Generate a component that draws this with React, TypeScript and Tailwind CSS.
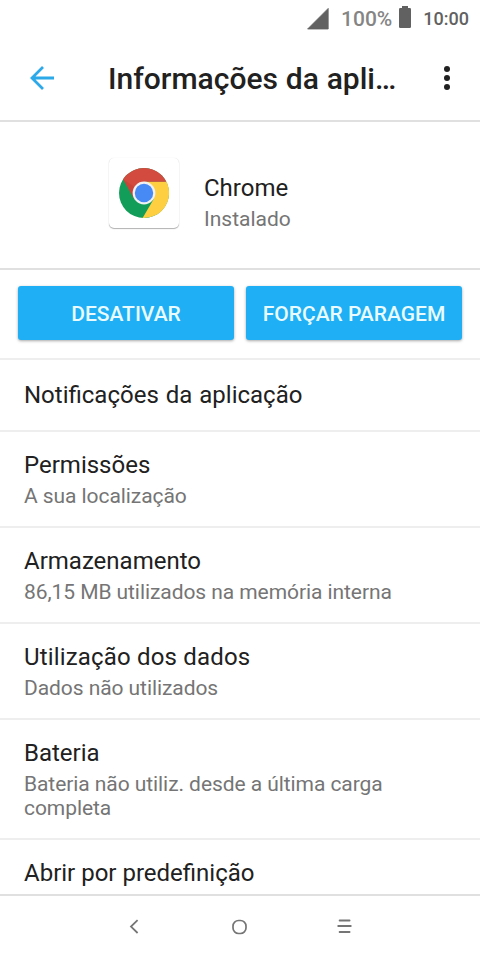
import React from 'react';

const SETTINGS: { title: string; summary?: string; spacing?: string }[] = [
  { title: 'Notificações da aplicação', spacing: '[word-spacing:1px]' },
  { title: 'Permissões', summary: 'A sua localização' },
  { title: 'Armazenamento', summary: '86,15 MB utilizados na memória interna' },
  { title: 'Utilização dos dados', summary: 'Dados não utilizados', spacing: 'tracking-[0.17px]' },
  { title: 'Bateria', summary: 'Bateria não utiliz. desde a última carga completa' },
];

const StatusBar = () => (
  <div className="flex h-9 shrink-0 items-center justify-end pt-0.5 pr-[11px] text-[#616161]">
    <svg className="mr-3 size-[22px]" viewBox="0 0 22 22" fill="currentColor">
      <path d="M21.2 0.4V21H0.6z" stroke="currentColor" strokeWidth="0.8" strokeLinejoin="round" />
    </svg>
    <span className="mr-[7px] text-[21px] leading-6 font-medium text-[#858585]">100%</span>
    <svg className="mr-3 mb-1 h-[22px] w-3" viewBox="0 0 12 22" fill="currentColor">
      <path d="M3 0h6v2.5H3z" />
      <rect y="2" width="12" height="20" rx="1.2" />
    </svg>
    <span className="text-[18px] leading-6 font-medium">10:00</span>
  </div>
);

const ChromeIcon = () => (
  <div className="flex size-[70px] items-center justify-center rounded-[5px] bg-white shadow-[0_1px_1px_rgba(0,0,0,0.3),0_0_1px_rgba(0,0,0,0.15)]">
    <svg className="size-[70px]" viewBox="0 0 70 70">
      <circle cx="35" cy="35" r="25" fill="#129d59" />
      <path d="M35 23.6H57.3A25 25 0 0 1 33.6 60L44.9 40.7L35 35z" fill="#fdcf41" />
      <path d="M57.3 23.7H35V35L25.1 40.7L14.1 21.3A25 25 0 0 1 57.3 23.7z" fill="#d34a3e" />
      <path d="M14.1 21.3L25.1 40.7L25.6 29z" fill="#b93d32" opacity="0.4" />
      <circle cx="35" cy="35" r="11.4" fill="#f1f1f1" />
      <circle cx="35" cy="35" r="9.2" fill="#4789f5" />
    </svg>
  </div>
);

const ActionButton = ({ label }: { label: string }) => (
  <button className="h-[54px] flex-1 rounded-[3px] bg-[#1eaff5] pt-[3px] text-[21px] font-medium text-[#e9fbff] shadow-[0_1px_3px_rgba(0,0,0,0.35)]">
    {label}
  </button>
);

const SettingRow = ({ title, summary, spacing = '' }: { title: string; summary?: string; spacing?: string }) => (
  <li className={`border-b-2 border-[#eeeeee] px-6 ${summary ? 'pt-[19px] pb-[18px]' : 'py-[21px]'}`}>
    <p className={`text-2xl leading-7 text-[#212121] ${spacing}`}>{title}</p>
    {summary && (
      <p className="mt-[5px] text-[21px] leading-6 tracking-[-0.07px] text-[#757575]">{summary}</p>
    )}
  </li>
);

export default function App() {
  return (
    <div className="flex h-[960px] w-[480px] flex-col overflow-hidden bg-white font-[Roboto,sans-serif]">
      <StatusBar />

      <header className="flex h-[86px] shrink-0 items-center border-b-2 border-[#e0e0e0] pl-[30px]">
        <svg className="size-6 shrink-0" viewBox="0 0 24 24" fill="none" stroke="#2ba9e8" strokeWidth="2.8">
          <path d="M24 12H2M13 1L2 12L13 23" />
        </svg>
        <h1 className="ml-[54px] w-[290px] pt-0.5 text-[30px] leading-9 font-medium whitespace-nowrap text-[#212121] [word-spacing:0.4px]">
          Informações da apli…
        </h1>
        <svg className="ml-[46px] h-6 w-1.5 shrink-0" viewBox="0 0 6 24" fill="#212121">
          <circle cx="3" cy="3" r="3" />
          <circle cx="3" cy="12" r="3" />
          <circle cx="3" cy="21" r="3" />
        </svg>
      </header>

      <main className="min-h-0 flex-1 overflow-hidden">
        <section className="flex h-[148px] items-start border-b-2 border-[#e0e0e0] pt-9 pl-[109px]">
          <ChromeIcon />
          <div className="pt-4 pl-[25px]">
            <p className="text-2xl leading-7 text-[#212121]">Chrome</p>
            <p className="mt-[5px] text-[21px] leading-6 text-[#757575]">Instalado</p>
          </div>
        </section>

        <section className="flex h-[90px] gap-3 border-b-2 border-[#eeeeee] px-[18px] pt-4">
          <ActionButton label="DESATIVAR" />
          <ActionButton label="FORÇAR PARAGEM" />
        </section>

        <ul>
          {SETTINGS.map((item) => (
            <SettingRow key={item.title} {...item} />
          ))}
          <li className="px-6 pt-[19px] text-2xl leading-7 text-[#212121]">Abrir por predefinição</li>
        </ul>
      </main>

      {/* Navigation bar */}
      <nav className="flex h-[66px] shrink-0 items-start border-t-2 border-[#e0e0e0] pt-[23px] pl-[129px] text-[#757575]">
        <svg className="h-4 w-[10px]" viewBox="0 0 10 16" fill="none" stroke="currentColor" strokeWidth="1.8">
          <path d="M8.6 1.2L2 7.6L8.6 14" />
        </svg>
        <svg className="ml-[92px] size-4" viewBox="0 0 16 16" fill="none" stroke="currentColor" strokeWidth="1.7">
          <rect x="2" y="1.5" width="13" height="13" rx="5.6" />
        </svg>
        <svg className="ml-[90px] size-4" viewBox="0 0 16 16" stroke="currentColor" strokeWidth="1.8" strokeLinecap="round">
          <path d="M2.6 1.5H12.6M1.2 7H13.8M2.6 13H12.6" />
        </svg>
      </nav>
    </div>
  );
}
